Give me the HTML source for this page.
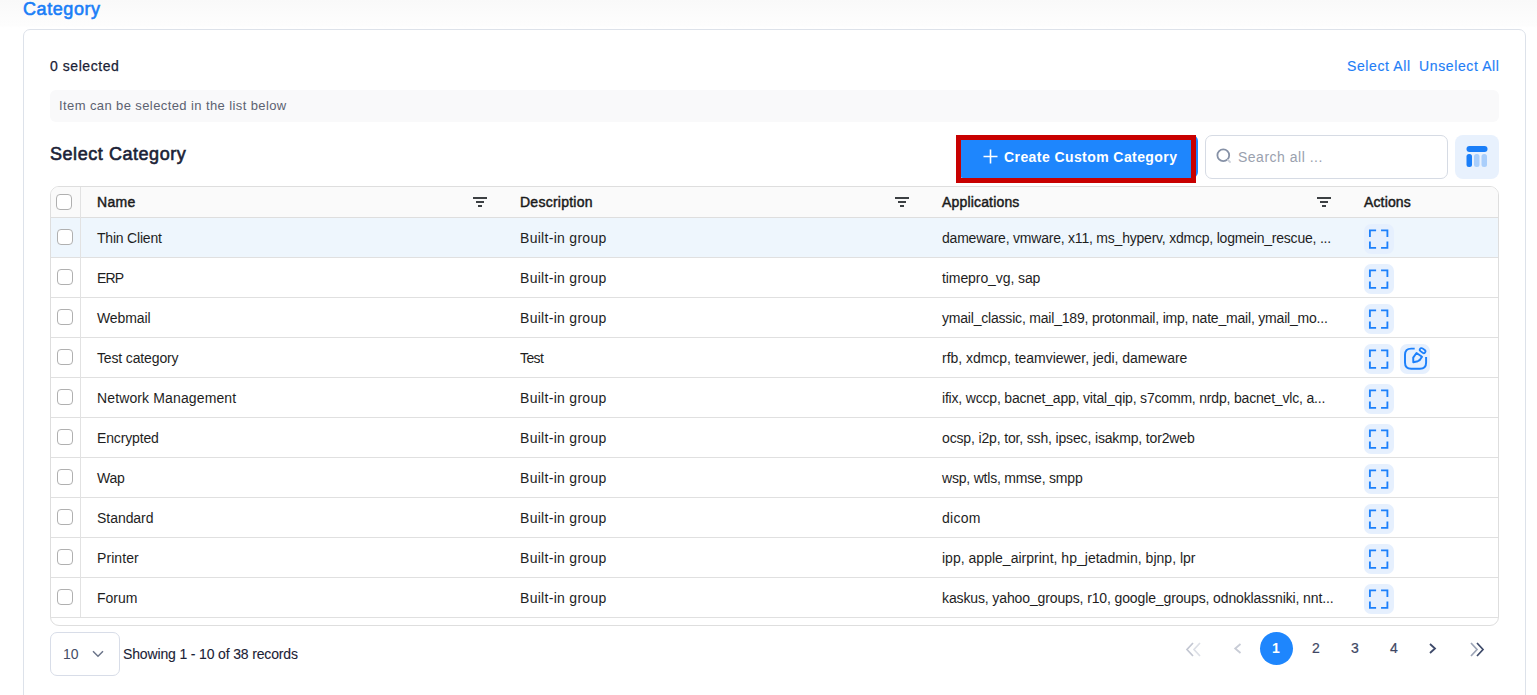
<!DOCTYPE html>
<html><head><meta charset="utf-8">
<style>
*{box-sizing:border-box;margin:0;padding:0}
html,body{width:1537px;height:695px;overflow:hidden;background:#fff;font-family:"Liberation Sans",sans-serif;}
.topfade{position:absolute;left:0;top:0;width:1537px;height:28px;background:linear-gradient(#f9f9f9,#fdfdfd 90%,#fff);}
.title{position:absolute;left:23px;top:-2px;font-size:18px;font-weight:400;color:#1a7ef7;-webkit-text-stroke:0.6px #1a7ef7;letter-spacing:0.57px;line-height:22px;}
.card{position:absolute;left:23px;top:29px;width:1503px;height:700px;border:1px solid #dde2ea;border-radius:7px;background:#fff;}
.abs{position:absolute;white-space:nowrap;}
.sel{left:50px;top:57px;font-size:14px;color:#1b2236;letter-spacing:0.55px;line-height:18px;-webkit-text-stroke:0.25px #1b2236;}
.link{font-size:14px;color:#1f7ef6;line-height:18px;top:57px;-webkit-text-stroke:0.15px #1f7ef6;}
.info{position:absolute;left:50px;top:90px;width:1449px;height:32px;background:#f9f9fa;border-radius:6px;}
.infot{left:59px;top:98px;font-size:13px;color:#5c6271;letter-spacing:0.4px;line-height:16px;}
.h2{left:50px;top:143px;font-size:18px;font-weight:400;color:#1b2236;-webkit-text-stroke:0.6px #1b2236;letter-spacing:0.55px;line-height:22px;}
.btn{position:absolute;left:957px;top:135px;width:241px;height:43px;background:#1e86fd;border-radius:6px;}
.redbox{position:absolute;left:956px;top:135px;width:240px;height:48px;border:5px solid #c80000;}
.btnt{left:1004px;top:148px;font-size:14px;font-weight:700;color:#fff;letter-spacing:0.42px;line-height:18px;}
.search{position:absolute;left:1205px;top:135px;width:243px;height:44px;border:1px solid #d6dbe4;border-radius:7px;background:#fff;}
.searcht{left:1238px;top:147.5px;font-size:14px;color:#9aa1ae;letter-spacing:0.5px;line-height:18px;}
.colbtn{position:absolute;left:1455px;top:135px;width:44px;height:44px;background:#e8f1fd;border-radius:8px;}
.table{position:absolute;left:50px;top:186px;width:1449px;height:440px;border:1px solid #dedede;border-radius:9px;overflow:hidden;background:#fff;}
.thead{position:absolute;left:0;top:0;width:1447px;height:31px;background:#fafafa;border-bottom:1px solid #dedede;}
.row{position:absolute;left:0;width:1447px;height:40px;border-bottom:1px solid #e0e0e0;}
.row.hl{background:#eef6fd;}
.vsep{position:absolute;left:29px;top:0;width:1px;height:430px;background:#e2e2e2;}
.cb{position:absolute;width:16px;height:16px;border:1px solid #b0b0b0;border-radius:4px;background:#fff;}
.th{font-size:14px;font-weight:400;color:#1a1a1a;-webkit-text-stroke:0.45px #1a1a1a;line-height:18px;}
.td{font-size:14px;color:#1e1e1e;line-height:18px;letter-spacing:-0.2px;}
.filt{position:absolute;width:14px;height:10px;}
.act{position:absolute;width:30px;height:30px;background:#e6f0fe;border-radius:7px;}
.act svg{position:absolute;left:0;top:0;}
.psel{position:absolute;left:50px;top:632px;width:70px;height:44px;border:1px solid #d8dde8;border-radius:7px;}
.pselt{left:63px;top:645px;font-size:14px;color:#454d66;line-height:18px;}
.showing{left:123px;top:645px;font-size:14px;color:#1b2236;line-height:18px;letter-spacing:-0.15px;-webkit-text-stroke:0.1px #1b2236;}
.pg{font-size:14px;color:#3e4663;line-height:18px;top:639px;-webkit-text-stroke:0.2px #3e4663;}
.pgc{position:absolute;left:1260px;top:632px;width:33px;height:33px;border-radius:50%;background:#1e86fd;}
</style></head><body>
<div class="topfade"></div>
<div class="title abs">Category</div>
<div class="card"></div>
<div class="abs sel">0 selected</div>
<div class="abs link" style="left:1347px;letter-spacing:0.62px">Select All</div>
<div class="abs link" style="left:1419px;letter-spacing:0.62px">Unselect All</div>
<div class="info"></div>
<div class="abs infot">Item can be selected in the list below</div>
<div class="abs h2">Select Category</div>

<div class="btn"></div>
<div class="redbox"></div>
<svg class="abs" style="left:983px;top:149px" width="15" height="15" viewBox="0 0 15 15"><path d="M7.5 0.5V14.5M0.5 7.5H14.5" stroke="#fff" stroke-width="1.6" fill="none"/></svg>
<div class="abs btnt">Create Custom Category</div>

<div class="search"></div>
<svg class="abs" style="left:1214px;top:146px" width="20" height="20" viewBox="0 0 20 20"><circle cx="9.3" cy="9.2" r="5.9" stroke="#8691a6" stroke-width="1.8" fill="none"/><path d="M14 14L16 16" stroke="#cdd2db" stroke-width="1.8" stroke-linecap="round"/></svg>
<div class="abs searcht">Search all ...</div>

<div class="colbtn"></div>
<svg class="abs" style="left:1466px;top:146px" width="22" height="22" viewBox="0 0 22 22"><rect x="0.5" y="0" width="21" height="6" rx="3" fill="#1a7ef8"/><rect x="0.5" y="8" width="5.5" height="13" rx="2.5" fill="#1a7ef8"/><rect x="8" y="8" width="5.5" height="13" rx="2.5" fill="#a9cefb"/><rect x="15.5" y="8" width="5.5" height="13" rx="2.5" fill="#a9cefb"/></svg>

<div class="table" id="tbl">
  <div class="thead"></div>
  <div class="cb" style="left:5px;top:7px"></div>
  <div class="abs th" style="left:46px;top:6px;letter-spacing:0.3px">Name</div>
  <svg class="filt" style="left:422px;top:10px" width="14" height="10" viewBox="0 0 14 10"><path d="M0 1H14M3 5H11M5 9H9" stroke="#3c4043" stroke-width="2"/></svg>
  <div class="abs th" style="left:469px;top:6px;letter-spacing:0.25px">Description</div>
  <svg class="filt" style="left:844px;top:10px" width="14" height="10" viewBox="0 0 14 10"><path d="M0 1H14M3 5H11M5 9H9" stroke="#3c4043" stroke-width="2"/></svg>
  <div class="abs th" style="left:891px;top:6px;letter-spacing:0.17px">Applications</div>
  <svg class="filt" style="left:1266px;top:10px" width="14" height="10" viewBox="0 0 14 10"><path d="M0 1H14M3 5H11M5 9H9" stroke="#3c4043" stroke-width="2"/></svg>
  <div class="abs th" style="left:1313px;top:6px;letter-spacing:0.14px">Actions</div>
  <div class="row hl" style="top:31px"></div>
  <div class="cb" style="left:6px;top:42px"></div>
  <div class="abs td" style="left:46px;top:42px;letter-spacing:-0.2px">Thin Client</div>
  <div class="abs td" style="left:469px;top:42px;letter-spacing:0.292px">Built-in group</div>
  <div class="abs td" style="left:891px;top:42px;letter-spacing:-0.214px">dameware, vmware, x11, ms_hyperv, xdmcp, logmein_rescue, ...</div>
  <div class="act" style="left:1313px;top:37px"><svg width="30" height="30" viewBox="0 0 30 30"><path d="M5.9 12.9V6.35H12.1M17.05 6.35H23.4V12.9M23.4 17.5V23.9H17.05M12.1 23.9H5.9V17.5" stroke="#1c80fb" stroke-width="1.85" fill="none"/></svg></div>
  <div class="row" style="top:71px"></div>
  <div class="cb" style="left:6px;top:82px"></div>
  <div class="abs td" style="left:46px;top:82px;letter-spacing:-0.9px">ERP</div>
  <div class="abs td" style="left:469px;top:82px;letter-spacing:0.292px">Built-in group</div>
  <div class="abs td" style="left:891px;top:82px;letter-spacing:-0.086px">timepro_vg, sap</div>
  <div class="act" style="left:1313px;top:77px"><svg width="30" height="30" viewBox="0 0 30 30"><path d="M5.9 12.9V6.35H12.1M17.05 6.35H23.4V12.9M23.4 17.5V23.9H17.05M12.1 23.9H5.9V17.5" stroke="#1c80fb" stroke-width="1.85" fill="none"/></svg></div>
  <div class="row" style="top:111px"></div>
  <div class="cb" style="left:6px;top:122px"></div>
  <div class="abs td" style="left:46px;top:122px;letter-spacing:-0.1px">Webmail</div>
  <div class="abs td" style="left:469px;top:122px;letter-spacing:0.292px">Built-in group</div>
  <div class="abs td" style="left:891px;top:122px;letter-spacing:-0.198px">ymail_classic, mail_189, protonmail, imp, nate_mail, ymail_mo...</div>
  <div class="act" style="left:1313px;top:117px"><svg width="30" height="30" viewBox="0 0 30 30"><path d="M5.9 12.9V6.35H12.1M17.05 6.35H23.4V12.9M23.4 17.5V23.9H17.05M12.1 23.9H5.9V17.5" stroke="#1c80fb" stroke-width="1.85" fill="none"/></svg></div>
  <div class="row" style="top:151px"></div>
  <div class="cb" style="left:6px;top:162px"></div>
  <div class="abs td" style="left:46px;top:162px;letter-spacing:-0.142px">Test category</div>
  <div class="abs td" style="left:469px;top:162px;letter-spacing:-0.6px">Test</div>
  <div class="abs td" style="left:891px;top:162px;letter-spacing:-0.035px">rfb, xdmcp, teamviewer, jedi, dameware</div>
  <div class="act" style="left:1313px;top:157px"><svg width="30" height="30" viewBox="0 0 30 30"><path d="M5.9 12.9V6.35H12.1M17.05 6.35H23.4V12.9M23.4 17.5V23.9H17.05M12.1 23.9H5.9V17.5" stroke="#1c80fb" stroke-width="1.85" fill="none"/></svg></div>
  <div class="act" style="left:1349px;top:157px"><svg width="30" height="30" viewBox="0 0 30 30"><path d="M14.7 4.6H11.2C7.2 4.6 5 6.8 5 10.8V18.6C5 22.6 7.2 24.8 11.2 24.8H19.9C23.9 24.8 26.1 22.6 26.1 18.6V12.9" stroke="#1c80fb" stroke-width="1.95" fill="none"/><path d="M13.3 18.2L13.2 13.6L16.5 9L22 12.7C20.8 15 19.5 16.6 17.8 17.2Z" stroke="#1c80fb" stroke-width="1.95" fill="none" stroke-linejoin="round"/><rect x="19.5" y="4.9" width="6.2" height="3.4" rx="1.7" transform="rotate(37 22.6 6.6)" stroke="#1c80fb" stroke-width="1.8" fill="none"/></svg></div>
  <div class="row" style="top:191px"></div>
  <div class="cb" style="left:6px;top:202px"></div>
  <div class="abs td" style="left:46px;top:202px;letter-spacing:0.129px">Network Management</div>
  <div class="abs td" style="left:469px;top:202px;letter-spacing:0.292px">Built-in group</div>
  <div class="abs td" style="left:891px;top:202px;letter-spacing:-0.188px">ifix, wccp, bacnet_app, vital_qip, s7comm, nrdp, bacnet_vlc, a...</div>
  <div class="act" style="left:1313px;top:197px"><svg width="30" height="30" viewBox="0 0 30 30"><path d="M5.9 12.9V6.35H12.1M17.05 6.35H23.4V12.9M23.4 17.5V23.9H17.05M12.1 23.9H5.9V17.5" stroke="#1c80fb" stroke-width="1.85" fill="none"/></svg></div>
  <div class="row" style="top:231px"></div>
  <div class="cb" style="left:6px;top:242px"></div>
  <div class="abs td" style="left:46px;top:242px;letter-spacing:-0.15px">Encrypted</div>
  <div class="abs td" style="left:469px;top:242px;letter-spacing:0.292px">Built-in group</div>
  <div class="abs td" style="left:891px;top:242px;letter-spacing:-0.152px">ocsp, i2p, tor, ssh, ipsec, isakmp, tor2web</div>
  <div class="act" style="left:1313px;top:237px"><svg width="30" height="30" viewBox="0 0 30 30"><path d="M5.9 12.9V6.35H12.1M17.05 6.35H23.4V12.9M23.4 17.5V23.9H17.05M12.1 23.9H5.9V17.5" stroke="#1c80fb" stroke-width="1.85" fill="none"/></svg></div>
  <div class="row" style="top:271px"></div>
  <div class="cb" style="left:6px;top:282px"></div>
  <div class="abs td" style="left:46px;top:282px;letter-spacing:-0.3px">Wap</div>
  <div class="abs td" style="left:469px;top:282px;letter-spacing:0.292px">Built-in group</div>
  <div class="abs td" style="left:891px;top:282px;letter-spacing:-0.2px">wsp, wtls, mmse, smpp</div>
  <div class="act" style="left:1313px;top:277px"><svg width="30" height="30" viewBox="0 0 30 30"><path d="M5.9 12.9V6.35H12.1M17.05 6.35H23.4V12.9M23.4 17.5V23.9H17.05M12.1 23.9H5.9V17.5" stroke="#1c80fb" stroke-width="1.85" fill="none"/></svg></div>
  <div class="row" style="top:311px"></div>
  <div class="cb" style="left:6px;top:322px"></div>
  <div class="abs td" style="left:46px;top:322px;letter-spacing:-0.043px">Standard</div>
  <div class="abs td" style="left:469px;top:322px;letter-spacing:0.292px">Built-in group</div>
  <div class="abs td" style="left:891px;top:322px;letter-spacing:0.25px">dicom</div>
  <div class="act" style="left:1313px;top:317px"><svg width="30" height="30" viewBox="0 0 30 30"><path d="M5.9 12.9V6.35H12.1M17.05 6.35H23.4V12.9M23.4 17.5V23.9H17.05M12.1 23.9H5.9V17.5" stroke="#1c80fb" stroke-width="1.85" fill="none"/></svg></div>
  <div class="row" style="top:351px"></div>
  <div class="cb" style="left:6px;top:362px"></div>
  <div class="abs td" style="left:46px;top:362px;letter-spacing:0.083px">Printer</div>
  <div class="abs td" style="left:469px;top:362px;letter-spacing:0.292px">Built-in group</div>
  <div class="abs td" style="left:891px;top:362px;letter-spacing:0.014px">ipp, apple_airprint, hp_jetadmin, bjnp, lpr</div>
  <div class="act" style="left:1313px;top:357px"><svg width="30" height="30" viewBox="0 0 30 30"><path d="M5.9 12.9V6.35H12.1M17.05 6.35H23.4V12.9M23.4 17.5V23.9H17.05M12.1 23.9H5.9V17.5" stroke="#1c80fb" stroke-width="1.85" fill="none"/></svg></div>
  <div class="row" style="top:391px"></div>
  <div class="cb" style="left:6px;top:402px"></div>
  <div class="abs td" style="left:46px;top:402px;letter-spacing:-0.025px">Forum</div>
  <div class="abs td" style="left:469px;top:402px;letter-spacing:0.292px">Built-in group</div>
  <div class="abs td" style="left:891px;top:402px;letter-spacing:-0.124px">kaskus, yahoo_groups, r10, google_groups, odnoklassniki, nnt...</div>
  <div class="act" style="left:1313px;top:397px"><svg width="30" height="30" viewBox="0 0 30 30"><path d="M5.9 12.9V6.35H12.1M17.05 6.35H23.4V12.9M23.4 17.5V23.9H17.05M12.1 23.9H5.9V17.5" stroke="#1c80fb" stroke-width="1.85" fill="none"/></svg></div>
  <div class="vsep"></div>
</div>

<div class="psel"></div>
<div class="abs pselt">10</div>
<svg class="abs" style="left:92px;top:650px" width="12" height="8" viewBox="0 0 12 8"><path d="M1 1.2L6 6.2L11 1.2" stroke="#6b7489" stroke-width="1.5" fill="none"/></svg>
<div class="abs showing">Showing 1 - 10 of 38 records</div>

<svg class="abs" style="left:1185px;top:642px" width="17" height="15" viewBox="0 0 17 15"><path d="M8 1L2 7.5L8 14" stroke="#c3c7d2" stroke-width="1.7" fill="none"/><path d="M15 1L9 7.5L15 14" stroke="#dcdfe6" stroke-width="1.7" fill="none"/></svg>
<svg class="abs" style="left:1233px;top:643px" width="9" height="12" viewBox="0 0 9 12"><path d="M7.5 1L2.2 5.5L7.5 10" stroke="#c8ccd6" stroke-width="1.8" fill="none"/></svg>
<div class="pgc"></div>
<div class="abs pg" style="left:1272px;color:#fff;font-weight:700;-webkit-text-stroke:0 #fff">1</div>
<div class="abs pg" style="left:1312px">2</div>
<div class="abs pg" style="left:1351px">3</div>
<div class="abs pg" style="left:1390px">4</div>
<svg class="abs" style="left:1428px;top:643px" width="9" height="12" viewBox="0 0 9 12"><path d="M2 1L7 5.5L2 10" stroke="#3e4a6a" stroke-width="1.8" fill="none"/></svg>
<svg class="abs" style="left:1469px;top:642px" width="16" height="15" viewBox="0 0 16 15"><path d="M2 1L8 7.5L2 14" stroke="#9ca4b6" stroke-width="1.7" fill="none"/><path d="M8 1L14 7.5L8 14" stroke="#3e4a6a" stroke-width="1.7" fill="none"/></svg>
</body></html>
